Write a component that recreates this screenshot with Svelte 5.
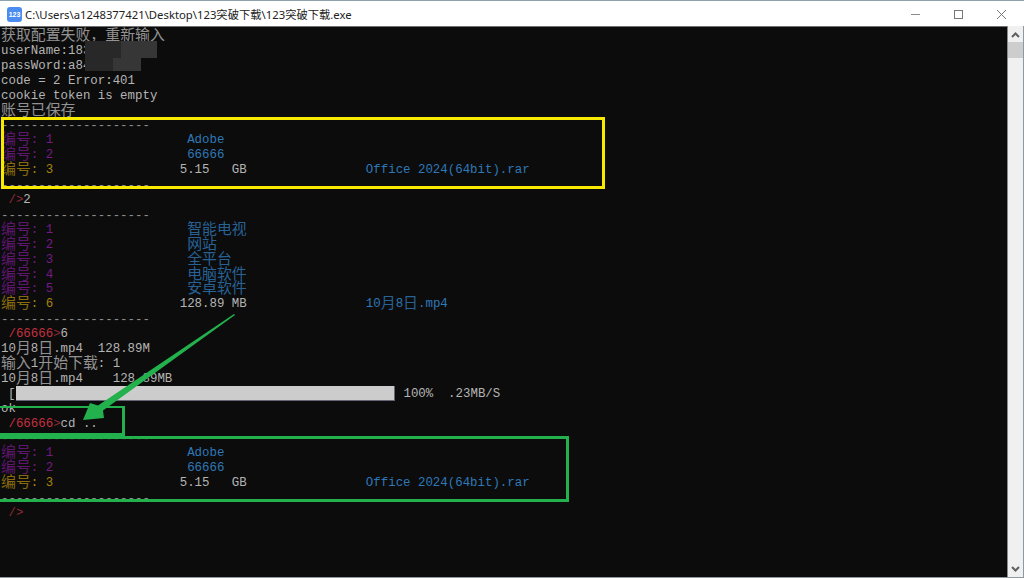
<script>
  const P = 'purple', Y = 'gold', B = 'blue', W = 'gray', R = 'red', D = 'dim';

  // one line = list of [text, colour], null = the progress row
  const dash = [['--------------------', 'gray rule']];
  const gap = (n) => [' '.repeat(n), W];
  const root = [
    [['编号: 1', P], gap(18), ['Adobe', B]],
    [['编号: 2', P], gap(18), ['66666', B]],
    [['编号: 3', Y], gap(17), ['5.15   GB', W], gap(16), ['Office 2024(64bit).rar', B]],
    dash
  ];
  const lines = [
    [['获取配置失败，重新输入', W]],
    [['userName:183', W]],
    [['passWord:a84', W]],
    [['code = 2 Error:401', W]],
    [['cookie token is empty', W]],
    [['账号已保存', W]],
    dash,
    ...root,
    [[' />', D], ['2', W]],
    dash,
    [['编号: 1', P], gap(18), ['智能电视', B]],
    [['编号: 2', P], gap(18), ['网站', B]],
    [['编号: 3', P], gap(18), ['全平台', B]],
    [['编号: 4', P], gap(18), ['电脑软件', B]],
    [['编号: 5', P], gap(18), ['安卓软件', B]],
    [['编号: 6', Y], gap(17), ['128.89 MB', W], gap(16), ['10月8日.mp4', B]],
    dash,
    [[' /66666', R], ['>', D], ['6', W]],
    [['10月8日.mp4  128.89M', W]],
    [['输入1开始下载: 1', W]],
    [['10月8日.mp4    128.89MB', W]],
    null,
    [['ok', W]],
    [[' /66666', R], ['>', D], ['cd ..', W]],
    dash,
    ...root,
    [[' />', D]]
  ];

  // CJK glyphs are two cells wide, so they get a bigger font size
  function runs(text) {
    return text.match(/[\u3000-\u9fff\uff00-\uffef]+|[^\u3000-\u9fff\uff00-\uffef]+/g) ?? [];
  }
  const isCjk = (s) => /^[\u3000-\u9fff\uff00-\uffef]/.test(s);
</script>

<div class="window">
  <header class="titlebar">
    <div class="app-icon">123</div>
    <span class="title">C:\Users\a1248377421\Desktop\123突破下载\123突破下载.exe</span>
    <div class="controls">
      <svg width="43" height="26" viewBox="0 0 43 26"><path d="M17 13.5h9" stroke="#8a8a8a" stroke-width="1"/></svg>
      <svg width="43" height="26" viewBox="0 0 43 26"><rect x="17.5" y="9.5" width="8" height="8" fill="none" stroke="#777" stroke-width="1"/></svg>
      <svg width="43" height="26" viewBox="0 0 43 26"><path d="M17 9l9 9M26 9l-9 9" stroke="#777" stroke-width="1" fill="none"/></svg>
    </div>
  </header>

  <div class="body">
    <main class="console">
      {#each lines as line}
        {#if line}
          <div class="line">{#each line as [text, colour]}<span class={colour}>{#each runs(text) as run}<span class:cjk={isCjk(run)}>{run}</span>{/each}</span>{/each}</div>
        {:else}
          <div class="line progress"><span class="gray">[</span><div class="bar"></div><span class="gray pct">100%  .23MB/S</span></div>
        {/if}
      {/each}

      <div class="blur b1"></div>
      <div class="blur b2"></div>

      <div class="mark yellow"></div>
      <div class="mark green small"></div>
      <div class="mark green large"></div>
      <svg class="arrow" width="170" height="115" viewBox="0 0 170 115">
        <polygon points="8,107 15,90 23,92.5 159,1 160,2 28,97.5 29,105" fill="#22b14c"/>
      </svg>
    </main>
    <aside class="scrollbar">
      <svg width="15" height="16" viewBox="0 0 15 16"><path d="M4 11L7.5 7.5L11 11" stroke="#606060" stroke-width="2" fill="none"/></svg>
      <div class="thumb"></div>
      <svg class="down" width="15" height="16" viewBox="0 0 15 16"><path d="M4 6L7.5 9.5L11 6" stroke="#606060" stroke-width="2" fill="none"/></svg>
    </aside>
  </div>
</div>

<style>
  :global(body) {
    margin: 0;
    background: #fff;
    overflow: hidden;
  }

  .window {
    width: 1024px;
    height: 578px;
    display: flex;
    flex-direction: column;
    box-sizing: border-box;
    border-top: 1px solid #8fa3ad;
    border-bottom: 1px solid #8f9aa0;
    overflow: hidden;
  }

  .titlebar {
    height: 26px;
    flex: none;
    display: flex;
    align-items: center;
    background: #fff;
    padding-left: 7px;
    font-family: "Noto Sans", "Noto Sans CJK SC", sans-serif;
  }

  .app-icon {
    width: 15px;
    height: 15px;
    border-radius: 3px;
    background: #4a8cf0;
    color: #fff;
    font-size: 7px;
    line-height: 15px;
    text-align: center;
    font-weight: 700;
    font-family: "Liberation Sans", sans-serif;
  }

  .title {
    margin-left: 3px;
    font-size: 11.3px;
    color: #222;
    white-space: pre;
  }

  .controls {
    margin-left: auto;
    margin-right: 1px;
    display: flex;
  }

  .body {
    flex: 1;
    display: flex;
    min-height: 0;
  }

  .console {
    position: relative;
    flex: 1;
    background: #0c0c0c;
    padding: 2px 0 0 1px;
    font-family: "Liberation Mono", "Noto Sans CJK SC", monospace;
    font-size: 12.42px;
    overflow: hidden;
    border-top: 1px solid #6f6f6f;
    margin-top: -1px;
  }

  .line {
    height: 14.91px;
    line-height: 14.91px;
    white-space: pre;
  }

  .cjk {
    font-size: 14.9px;
    line-height: 0;
    vertical-align: -1px;
    opacity: 0.8;
    font-family: "Noto Sans CJK SC", sans-serif;
  }

  .gray { color: #b4b4b4; }
  .rule { color: #8c8c8c; vertical-align: -1px; }
  .purple { color: #741a86; }
  .gold { color: #a8830f; }
  .blue { color: #2f78b8; }
  .red { color: #c5303f; }
  .dim { color: #8c2a34; }

  .blur {
    position: absolute;
    background: linear-gradient(90deg, #282828 0 50%, #363636 50% 100%);
  }
  .b1 { left: 85px; top: 14px; width: 72px; height: 17px; }
  .b2 { left: 85px; top: 31px; width: 56px; height: 13px; }

  .progress {
    display: flex;
    padding-left: 7px;
  }
  .bar {
    width: 378px;
    height: 14px;
    margin: -1px 0 0 1px;
    background: #cccccc;
    border-bottom: 1px solid #667;
    border-right: 1px solid #667;
  }
  .pct { margin-left: 8px; }

  .mark {
    position: absolute;
    box-sizing: border-box;
    border-style: solid;
    border-width: 3px;
  }
  .yellow { left: 1px; top: 90px; width: 604px; height: 72px; border-color: #f7e900; }
  .green { border-color: #22b14c; }
  .small { left: -3px; top: 379px; width: 128px; height: 30px; border-top-width: 2px; }
  .large { left: -3px; top: 409px; width: 572px; height: 66px; }

  .arrow {
    position: absolute;
    left: 75px;
    top: 286px;
  }

  .scrollbar {
    width: 15px;
    flex: none;
    margin-top: -1px;
    background: #f0f0f0;
    border-left: 1px solid #8a8a8a;
    border-right: 1px solid #8f9aa0;
    display: flex;
    flex-direction: column;
  }
  .thumb {
    height: 16px;
    background: #cdcdcd;
  }
  .down {
    margin-top: auto;
  }
</style>
